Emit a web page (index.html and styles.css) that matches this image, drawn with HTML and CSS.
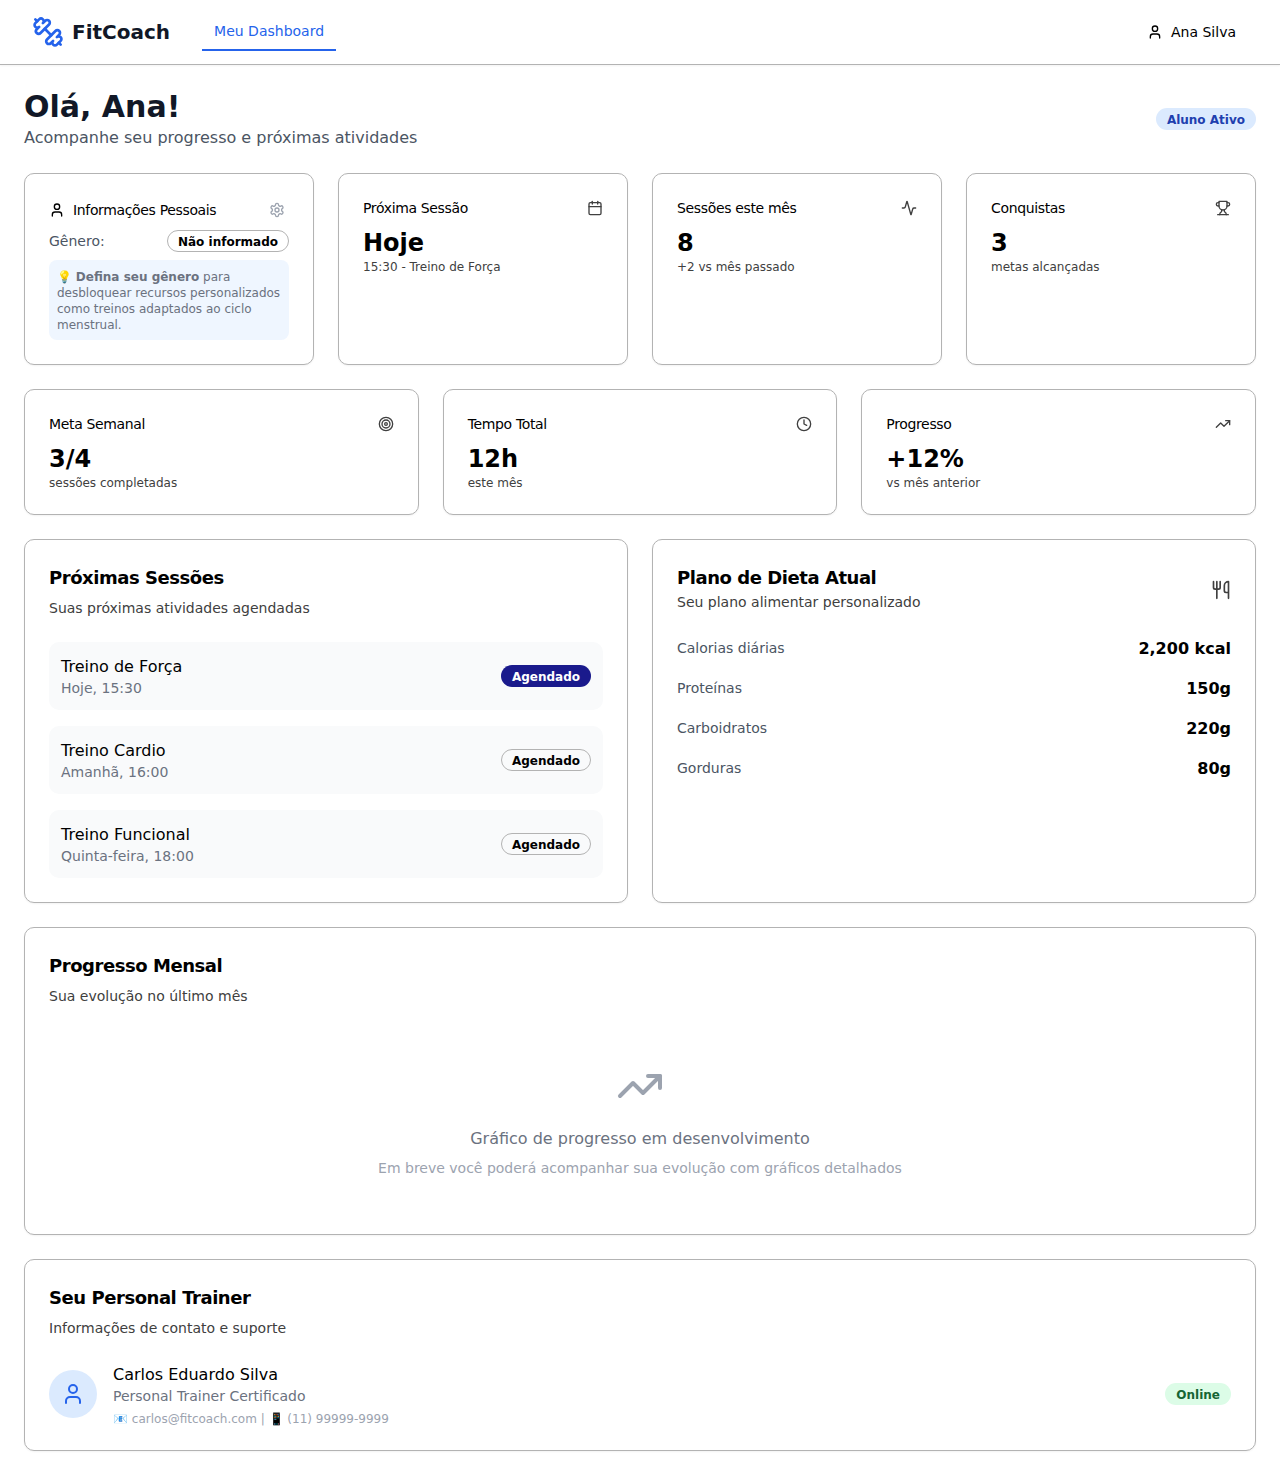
FILE: index.html
```html
<!DOCTYPE html>
<html lang="pt-br">
<head>
    <meta charset="UTF-8">
    <meta name="viewport" content="width=device-width, initial-scale=1.0">
    <title>FitCoach - Meu Dashboard</title>
    <link rel="stylesheet" href="styles.css">
</head>
<body>
    <svg class="sprite" xmlns="http://www.w3.org/2000/svg">
        <symbol id="i-user" viewBox="0 0 24 24"><path d="M19 21v-2a4 4 0 0 0-4-4H9a4 4 0 0 0-4 4v2"/><circle cx="12" cy="7" r="4"/></symbol>
        <symbol id="i-trend" viewBox="0 0 24 24"><polyline points="22 7 13.5 15.5 8.5 10.5 2 17"/><polyline points="16 7 22 7 22 13"/></symbol>
    </svg>

    <header class="topbar">
        <div class="topbar-left">
            <div class="logo">
                <svg class="icon logo-icon" viewBox="0 0 24 24"><path d="M14.4 14.4 9.6 9.6"/><path d="M18.657 21.485a2 2 0 1 1-2.829-2.828l-1.767 1.768a2 2 0 1 1-2.829-2.829l6.364-6.364a2 2 0 1 1 2.829 2.829l-1.768 1.767a2 2 0 1 1 2.828 2.829z"/><path d="m21.5 21.5-1.4-1.4"/><path d="M3.9 3.9 2.5 2.5"/><path d="M6.404 12.768a2 2 0 1 1-2.829-2.829l1.768-1.767a2 2 0 1 1-2.828-2.829l2.828-2.828a2 2 0 1 1 2.829 2.828l1.767-1.768a2 2 0 1 1 2.829 2.829z"/></svg>
                <span class="logo-text">FitCoach</span>
            </div>
            <a class="nav-tab" href="#">Meu Dashboard</a>
        </div>
        <div class="user-menu">
            <svg class="icon icon-16"><use href="#i-user"/></svg>
            <span>Ana Silva</span>
        </div>
    </header>

    <main class="page">
        <section class="page-head">
            <div>
                <h1>Olá, Ana!</h1>
                <p class="page-sub">Acompanhe seu progresso e próximas atividades</p>
            </div>
            <span class="badge badge-blue">Aluno Ativo</span>
        </section>

        <section class="grid grid-4">
            <div class="card">
                <div class="info-head">
                    <div class="info-title">
                        <svg class="icon icon-16"><use href="#i-user"/></svg>
                        <span>Informações Pessoais</span>
                    </div>
                    <button class="icon-btn">
                        <svg class="icon icon-16" viewBox="0 0 24 24"><path d="M12.22 2h-.44a2 2 0 0 0-2 2v.18a2 2 0 0 1-1 1.73l-.43.25a2 2 0 0 1-2 0l-.15-.08a2 2 0 0 0-2.73.73l-.22.38a2 2 0 0 0 .73 2.73l.15.1a2 2 0 0 1 1 1.72v.51a2 2 0 0 1-1 1.74l-.15.09a2 2 0 0 0-.73 2.73l.22.38a2 2 0 0 0 2.73.73l.15-.08a2 2 0 0 1 2 0l.43.25a2 2 0 0 1 1 1.73V20a2 2 0 0 0 2 2h.44a2 2 0 0 0 2-2v-.18a2 2 0 0 1 1-1.73l.43-.25a2 2 0 0 1 2 0l.15.08a2 2 0 0 0 2.73-.73l.22-.39a2 2 0 0 0-.73-2.73l-.15-.08a2 2 0 0 1-1-1.74v-.5a2 2 0 0 1 1-1.74l.15-.09a2 2 0 0 0 .73-2.73l-.22-.38a2 2 0 0 0-2.73-.73l-.15.08a2 2 0 0 1-2 0l-.43-.25a2 2 0 0 1-1-1.73V4a2 2 0 0 0-2-2z"/><circle cx="12" cy="12" r="3"/></svg>
                    </button>
                </div>
                <div class="gender-row">
                    <span class="gender-label">Gênero:</span>
                    <span class="badge badge-outline">Não informado</span>
                </div>
                <p class="gender-note">💡 <strong>Defina seu gênero</strong> para desbloquear recursos personalizados como treinos adaptados ao ciclo menstrual.</p>
            </div>

            <div class="card">
                <div class="stat-head">
                    <span>Próxima Sessão</span>
                    <svg class="icon icon-16 icon-gray" viewBox="0 0 24 24"><path d="M8 2v4"/><path d="M16 2v4"/><rect width="18" height="18" x="3" y="4" rx="2"/><path d="M3 10h18"/></svg>
                </div>
                <div class="stat-value">Hoje</div>
                <p class="stat-sub">15:30 - Treino de Força</p>
            </div>

            <div class="card">
                <div class="stat-head">
                    <span>Sessões este mês</span>
                    <svg class="icon icon-16 icon-gray" viewBox="0 0 24 24"><path d="M22 12h-2.48a2 2 0 0 0-1.93 1.46l-2.35 8.36a.25.25 0 0 1-.48 0L9.24 2.18a.25.25 0 0 0-.48 0l-2.35 8.36A2 2 0 0 1 4.49 12H2"/></svg>
                </div>
                <div class="stat-value">8</div>
                <p class="stat-sub">+2 vs mês passado</p>
            </div>

            <div class="card">
                <div class="stat-head">
                    <span>Conquistas</span>
                    <svg class="icon icon-16 icon-gray" viewBox="0 0 24 24"><path d="M6 9H4.5a2.5 2.5 0 0 1 0-5H6"/><path d="M18 9h1.5a2.5 2.5 0 0 0 0-5H18"/><path d="M4 22h16"/><path d="M10 14.66V17c0 .55-.47.98-.97 1.21C7.85 18.75 7 20.24 7 22"/><path d="M14 14.66V17c0 .55.47.98.97 1.21C16.15 18.75 17 20.24 17 22"/><path d="M18 2H6v7a6 6 0 0 0 12 0V2Z"/></svg>
                </div>
                <div class="stat-value">3</div>
                <p class="stat-sub">metas alcançadas</p>
            </div>
        </section>

        <section class="grid grid-3">
            <div class="card">
                <div class="stat-head">
                    <span>Meta Semanal</span>
                    <svg class="icon icon-16 icon-gray" viewBox="0 0 24 24"><circle cx="12" cy="12" r="10"/><circle cx="12" cy="12" r="6"/><circle cx="12" cy="12" r="2"/></svg>
                </div>
                <div class="stat-value">3/4</div>
                <p class="stat-sub">sessões completadas</p>
            </div>
            <div class="card">
                <div class="stat-head">
                    <span>Tempo Total</span>
                    <svg class="icon icon-16 icon-gray" viewBox="0 0 24 24"><circle cx="12" cy="12" r="10"/><polyline points="12 6 12 12 16 14"/></svg>
                </div>
                <div class="stat-value">12h</div>
                <p class="stat-sub">este mês</p>
            </div>
            <div class="card">
                <div class="stat-head">
                    <span>Progresso</span>
                    <svg class="icon icon-16 icon-gray"><use href="#i-trend"/></svg>
                </div>
                <div class="stat-value">+12%</div>
                <p class="stat-sub">vs mês anterior</p>
            </div>
        </section>

        <section class="grid grid-2">
            <div class="card">
                <h2>Próximas Sessões</h2>
                <p class="card-desc">Suas próximas atividades agendadas</p>
                <div class="session-list">
                    <div class="session">
                        <div>
                            <p class="session-name">Treino de Força</p>
                            <p class="session-when">Hoje, 15:30</p>
                        </div>
                        <span class="badge badge-navy">Agendado</span>
                    </div>
                    <div class="session">
                        <div>
                            <p class="session-name">Treino Cardio</p>
                            <p class="session-when">Amanhã, 16:00</p>
                        </div>
                        <span class="badge badge-outline">Agendado</span>
                    </div>
                    <div class="session">
                        <div>
                            <p class="session-name">Treino Funcional</p>
                            <p class="session-when">Quinta-feira, 18:00</p>
                        </div>
                        <span class="badge badge-outline">Agendado</span>
                    </div>
                </div>
            </div>

            <div class="card">
                <div class="diet-head">
                    <div>
                        <h2>Plano de Dieta Atual</h2>
                        <p class="diet-desc">Seu plano alimentar personalizado</p>
                    </div>
                    <svg class="icon diet-icon icon-gray" viewBox="0 0 24 24"><path d="M3 2v7c0 1.1.9 2 2 2h4a2 2 0 0 0 2-2V2"/><path d="M7 2v20"/><path d="M21 15V2a5 5 0 0 0-5 5v6c0 1.1.9 2 2 2h3Zm0 0v7"/></svg>
                </div>
                <div class="diet-list">
                    <div class="diet-row"><span>Calorias diárias</span><strong>2,200 kcal</strong></div>
                    <div class="diet-row"><span>Proteínas</span><strong>150g</strong></div>
                    <div class="diet-row"><span>Carboidratos</span><strong>220g</strong></div>
                    <div class="diet-row"><span>Gorduras</span><strong>80g</strong></div>
                </div>
            </div>
        </section>

        <section class="card">
            <h2>Progresso Mensal</h2>
            <p class="card-desc">Sua evolução no último mês</p>
            <div class="chart-empty">
                <svg class="icon icon-48"><use href="#i-trend"/></svg>
                <p class="chart-title">Gráfico de progresso em desenvolvimento</p>
                <p class="chart-text">Em breve você poderá acompanhar sua evolução com gráficos detalhados</p>
            </div>
        </section>

        <section class="card">
            <h2>Seu Personal Trainer</h2>
            <p class="card-desc">Informações de contato e suporte</p>
            <div class="trainer">
                <div class="trainer-info">
                    <div class="avatar">
                        <svg class="icon icon-24"><use href="#i-user"/></svg>
                    </div>
                    <div>
                        <p class="session-name">Carlos Eduardo Silva</p>
                        <p class="session-when">Personal Trainer Certificado</p>
                        <p class="trainer-contact">📧 carlos@fitcoach.com | 📱 (11) 99999-9999</p>
                    </div>
                </div>
                <span class="badge badge-green">Online</span>
            </div>
        </section>
    </main>
</body>
</html>
```

FILE: styles.css
```css
* {
    box-sizing: border-box;
}
body {
    margin: 0;
    font-family: "DejaVu Sans", sans-serif;
    font-size: 14px;
    line-height: 20px;
    color: #000;
    background-color: #fff;
}
h1, h2, p {
    margin: 0;
}
.sprite {
    display: none;
}

/* icones */
.icon {
    fill: none;
    stroke: currentColor;
    stroke-width: 2;
    stroke-linecap: round;
    stroke-linejoin: round;
    flex-shrink: 0;
}
.icon-16 {
    width: 16px;
    height: 16px;
}
.icon-24 {
    width: 24px;
    height: 24px;
}
.icon-48 {
    width: 48px;
    height: 48px;
    color: #9ca3af;
}
.icon-gray {
    color: #404040;
}

/* topo */
.topbar {
    height: 65px;
    padding: 0 32px;
    display: flex;
    align-items: center;
    justify-content: space-between;
    border-bottom: 1px solid #b3b3b3;
    box-shadow: 0 1px 2px rgba(0, 0, 0, 0.05);
}
.topbar-left {
    display: flex;
    align-items: center;
    gap: 32px;
}
.logo {
    display: flex;
    align-items: center;
    gap: 8px;
}
.logo-icon {
    width: 32px;
    height: 32px;
    color: #2563eb;
}
.logo-text {
    font-size: 20px;
    line-height: 28px;
    font-weight: 700;
    color: #111827;
}
.nav-tab {
    padding: 10px 12px 8px;
    margin-bottom: 2px;
    color: #2563eb;
    text-decoration: none;
    border-bottom: 2px solid #2563eb;
}
.user-menu {
    display: flex;
    align-items: center;
    gap: 8px;
    padding: 0 12px;
}

/* conteudo */
.page {
    padding: 24px;
    display: flex;
    flex-direction: column;
    gap: 24px;
}
.page-head {
    display: flex;
    align-items: center;
    justify-content: space-between;
}
h1 {
    font-size: 30px;
    line-height: 36px;
    font-weight: 700;
    color: #111827;
}
.page-sub {
    padding-top: 2px;
    font-size: 16px;
    line-height: 22px;
    color: #4b5563;
}
.grid {
    display: grid;
    gap: 24px;
}
.grid-4 {
    grid-template-columns: repeat(4, 1fr);
}
.grid-3 {
    grid-template-columns: repeat(3, 1fr);
}
.grid-2 {
    grid-template-columns: repeat(2, 1fr);
}
.card {
    padding: 24px;
    background-color: #fff;
    border: 1px solid #b3b3b3;
    border-radius: 10px;
    box-shadow: 0 1px 2px rgba(0, 0, 0, 0.05);
}

/* badges */
.badge {
    display: inline-block;
    padding: 3px 10px 1px;
    font-size: 12px;
    line-height: 16px;
    font-weight: 700;
    border: 1px solid transparent;
    border-radius: 999px;
    white-space: nowrap;
}
.badge-blue {
    background-color: #dbeafe;
    color: #1e40af;
}
.badge-outline {
    border-color: #b3b3b3;
    color: #000;
}
.badge-navy {
    background-color: #1a1a8c;
    color: #fff;
}
.badge-green {
    background-color: #dcfce7;
    color: #166534;
}

/* informacoes pessoais */
.info-head {
    display: flex;
    align-items: center;
    justify-content: space-between;
    margin-bottom: 8px;
}
.info-title {
    display: flex;
    align-items: center;
    gap: 8px;
    letter-spacing: -0.025em;
}
.icon-btn {
    width: 24px;
    height: 24px;
    padding: 0;
    display: flex;
    align-items: center;
    justify-content: center;
    color: #9ca3af;
    background: none;
    border: none;
}
.gender-row {
    display: flex;
    align-items: center;
    justify-content: space-between;
    margin-bottom: 8px;
}
.gender-label {
    color: #4b5563;
}
.gender-note {
    padding: 9px 8px 7px;
    font-size: 12px;
    line-height: 16px;
    color: #6b7280;
    background-color: #eff6ff;
    border-radius: 8px;
}

/* cards de numeros */
.stat-head {
    display: flex;
    align-items: center;
    justify-content: space-between;
    margin-bottom: 8px;
    letter-spacing: -0.025em;
}
.stat-value {
    padding-top: 2px;
    font-size: 24px;
    line-height: 30px;
    font-weight: 700;
}
.stat-sub {
    padding-top: 2px;
    font-size: 12px;
    line-height: 14px;
    color: #404040;
}

/* cards de secao */
h2 {
    font-size: 18px;
    line-height: 28px;
    font-weight: 700;
    letter-spacing: -0.025em;
}
.card-desc {
    margin-top: 6px;
    color: #404040;
}
.session-list {
    margin-top: 24px;
    display: flex;
    flex-direction: column;
    gap: 16px;
}
.session {
    padding: 12px;
    display: flex;
    align-items: center;
    justify-content: space-between;
    background-color: #f9fafb;
    border-radius: 10px;
}
.session-name {
    padding-top: 2px;
    font-size: 16px;
    line-height: 22px;
}
.session-when {
    color: #6b7280;
}

/* dieta */
.diet-head {
    display: flex;
    align-items: center;
    justify-content: space-between;
}
.diet-icon {
    width: 20px;
    height: 20px;
    margin-top: 4px;
}
.diet-desc {
    color: #404040;
}
.diet-list {
    margin-top: 24px;
    display: flex;
    flex-direction: column;
    gap: 16px;
}
.diet-row {
    display: flex;
    align-items: center;
    justify-content: space-between;
    color: #4b5563;
}
.diet-row strong {
    padding-top: 2px;
    font-size: 16px;
    line-height: 22px;
    color: #000;
}

/* grafico */
.chart-empty {
    margin-top: 24px;
    padding: 32px 0;
    display: flex;
    flex-direction: column;
    align-items: center;
    text-align: center;
}
.chart-title {
    margin-top: 16px;
    padding-top: 2px;
    font-size: 16px;
    line-height: 22px;
    color: #6b7280;
}
.chart-text {
    margin-top: 8px;
    color: #9ca3af;
}

/* personal */
.trainer {
    margin-top: 24px;
    display: flex;
    align-items: center;
    justify-content: space-between;
}
.trainer-info {
    display: flex;
    align-items: center;
    gap: 16px;
}
.avatar {
    width: 48px;
    height: 48px;
    display: flex;
    align-items: center;
    justify-content: center;
    color: #2563eb;
    background-color: #dbeafe;
    border-radius: 50%;
}
.trainer-contact {
    margin-top: 4px;
    padding-top: 2px;
    font-size: 12px;
    line-height: 14px;
    color: #9ca3af;
}
```
